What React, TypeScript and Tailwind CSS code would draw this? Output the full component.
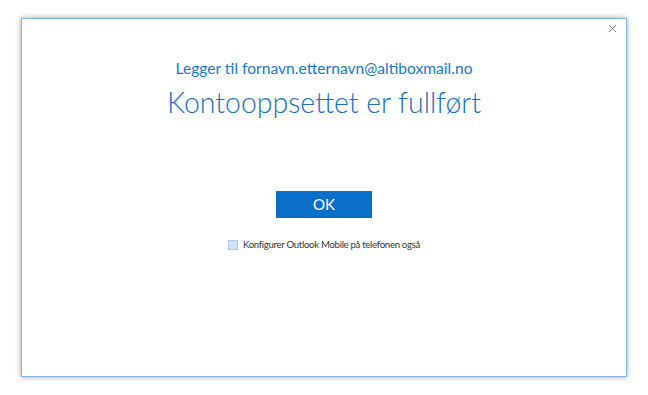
export default function App() {
  return (
    <div className="w-[648px] h-[395px] bg-white pl-[21px] pt-[18px]" style={{ fontFamily: 'Lato, "Open Sans", sans-serif' }}>
      <div className="relative w-[606px] h-[359px] bg-white border border-[#80b2de] shadow-[0_0_6px_rgba(0,0,0,0.35)] flex flex-col items-center">
        <button className="absolute right-[9px] top-[5px] leading-none">
          <svg width="9" height="9" viewBox="0 0 9 9" className="block">
            <path d="M1 1 L8 8 M8 1 L1 8" stroke="#8c8c8c" strokeWidth="1" />
          </svg>
        </button>

        <div className="mt-[37px] text-[15.6px] leading-[24px] text-[#2377c9]">
          Legger til fornavn.etternavn@altiboxmail.no
        </div>
        <div className="mt-[3px] text-[28.5px] leading-[38px] font-light text-[#1a6fc4]">
          Kontooppsettet er fullført
        </div>

        <button className="mt-[70px] w-[96px] h-[27px] bg-[#0a6fc9] text-white text-[15px] leading-none">
          OK
        </button>

        <label className="mt-[20px] flex items-center gap-[5px] text-[9.6px] tracking-[-0.3px] text-[#333] ml-[0px]">
          <span className="w-[10px] h-[10px] bg-[#cfe3f6] border border-[#a9c9e8]" />
          Konfigurer Outlook Mobile på telefonen også
        </label>
      </div>
    </div>
  );
}
